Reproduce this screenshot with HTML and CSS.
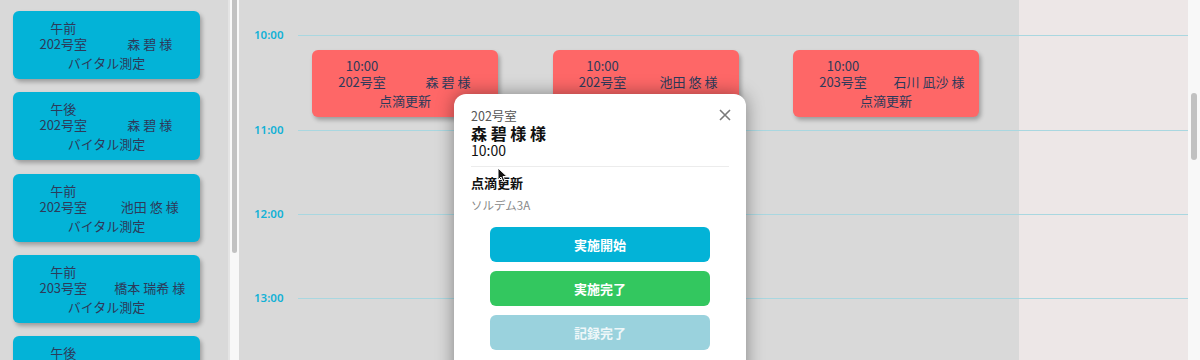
FILE: index.html
```html
<html lang="ja">
  <head>
    <meta charset="UTF-8" />
    <meta name="viewport" content="width=device-width, initial-scale=1.0" />
    <title>Schedule</title>
    <link rel="stylesheet" href="styles.css">
  </head>
  <body>
    <div class="page">
      <!-- task list -->
      <div class="sidebar">
        <div class="task-card">
          <span class="slot">午前</span><span></span>
          <span>202号室</span><span>森 碧 様</span>
          <span class="kind">バイタル測定</span>
        </div>
        <div class="task-card">
          <span class="slot">午後</span><span></span>
          <span>202号室</span><span>森 碧 様</span>
          <span class="kind">バイタル測定</span>
        </div>
        <div class="task-card">
          <span class="slot">午前</span><span></span>
          <span>202号室</span><span>池田 悠 様</span>
          <span class="kind">バイタル測定</span>
        </div>
        <div class="task-card">
          <span class="slot">午前</span><span></span>
          <span>203号室</span><span>橋本 瑞希 様</span>
          <span class="kind">バイタル測定</span>
        </div>
        <div class="task-card">
          <span class="slot">午後</span><span></span>
          <span>203号室</span><span>橋本 瑞希 様</span>
          <span class="kind">バイタル測定</span>
        </div>
        <div class="task-card">
          <span class="slot">午後</span><span></span>
          <span>203号室</span><span>石川 凪沙 様</span>
          <span class="kind">バイタル測定</span>
        </div>
      </div>
      <div class="scrollbar side-bar"><div class="thumb"></div></div>

      <!-- timeline -->
      <div class="timeline">
        <div class="hour-row">
          <div class="hour-label">10:00</div>
          <div class="hour-body events">
            <div class="task-card event">
              <span class="slot">10:00</span><span></span>
              <span>202号室</span><span>森 碧 様</span>
              <span class="kind">点滴更新</span>
            </div>
            <div class="task-card event">
              <span class="slot">10:00</span><span></span>
              <span>202号室</span><span>池田 悠 様</span>
              <span class="kind">点滴更新</span>
            </div>
            <div class="task-card event">
              <span class="slot">10:00</span><span></span>
              <span>203号室</span><span>石川 凪沙 様</span>
              <span class="kind">点滴更新</span>
            </div>
          </div>
        </div>
        <div class="hour-row">
          <div class="hour-label">11:00</div>
          <div class="hour-body"></div>
        </div>
        <div class="hour-row">
          <div class="hour-label">12:00</div>
          <div class="hour-body"></div>
        </div>
        <div class="hour-row">
          <div class="hour-label">13:00</div>
          <div class="hour-body"></div>
        </div>
      </div>
      <div class="scrollbar main-bar"><div class="thumb"></div></div>
    </div>

    <!-- detail dialog -->
    <div class="dialog">
      <svg class="close" width="12" height="12" viewBox="0 0 12 12">
        <path d="M1 1 L11 11 M11 1 L1 11" stroke="#7a7a7a" stroke-width="1.6" fill="none" />
      </svg>
      <div class="dialog-room">202号室</div>
      <div class="dialog-name">森 碧 様 様</div>
      <div class="dialog-time">10:00</div>
      <hr />
      <div class="dialog-title">点滴更新</div>
      <div class="dialog-note">ソルデム3A</div>
      <div class="actions">
        <button class="btn start">実施開始</button>
        <button class="btn done">実施完了</button>
        <button class="btn record">記録完了</button>
      </div>
    </div>

    <svg class="cursor" width="11" height="16" viewBox="0 0 11 16">
      <path d="M1 1 L1 13 L4 10 L6 15 L8 14 L6 9.5 L10 9.5 Z" fill="#111" stroke="#fff" stroke-width="1" />
    </svg>
  </body>
</html>
```

FILE: styles.css
```css
/* body styles */
body {
  margin: 0;
  padding: 0;
  font-family: "Noto Sans CJK JP", "Noto Sans", sans-serif;
  overflow: hidden;
}

.page {
  display: flex;
  height: 360px;
  overflow: hidden;
}

/* sidebar */
.sidebar {
  width: 215px;
  padding: 11px 0 0 13px;
  background-color: #d9d9d9;
  overflow: hidden;
}

.task-card {
  display: grid;
  grid-template-columns: 1fr 1fr;
  align-content: start;
  box-sizing: border-box;
  width: 187px;
  height: 68px;
  margin-bottom: 13.25px;
  padding: 9px 7px 0;
  border-radius: 6px;
  background-color: #03b3d7;
  box-shadow: 2px 3px 4px rgba(0, 0, 0, 0.28);
  color: #2d3a5a;
  font-size: 13px;
  line-height: 16px;
  text-align: center;
  white-space: nowrap;
}

.task-card .kind {
  grid-column: 1 / 3;
  margin-top: 3px;
}

/* fake scrollbars */
.scrollbar {
  box-sizing: border-box;
  background-color: #f8f8f8;
}

.side-bar {
  width: 11px;
  padding: 0 2px;
  border-left: 2px solid #e4e4e4;
}

.side-bar .thumb {
  height: 253px;
  border-radius: 0 0 4px 4px;
  background-color: #c1c1c1;
}

.main-bar {
  width: 12px;
  padding: 93px 3px 0;
}

.main-bar .thumb {
  height: 67px;
  border-radius: 3px;
  background-color: #c1c1c1;
}

/* timeline */
.timeline {
  flex: 1;
  padding-top: 35px;
  background: linear-gradient(to right, #d9d9d9 780px, #ede7e7 780px);
}

.hour-row {
  display: flex;
}

.hour-label {
  width: 44px;
  padding-left: 15px;
  margin-top: -7px;
  height: 14px;
  line-height: 14px;
  font-family: "Noto Sans", sans-serif;
  font-size: 11.5px;
  font-weight: 600;
  color: #12b1d6;
}

.hour-body {
  flex: 1;
  height: 83px;
  border-top: 1px solid #a9d7e0;
}

.events {
  display: flex;
  gap: 54.5px;
  height: auto;
  padding: 14px 0 13px 14px;
}

.task-card.event {
  width: 186px;
  height: 67px;
  margin: 0;
  padding-top: 8px;
  background-color: #fe6767;
}

/* dialog */
.dialog {
  position: absolute;
  left: 454px;
  top: 94px;
  width: 292px;
  height: 300px;
  box-sizing: border-box;
  padding: 13px 17px 0;
  border-radius: 12px;
  background-color: #fff;
  box-shadow: 0 0 18px rgba(0, 0, 0, 0.4);
  color: #111;
}

.close {
  position: absolute;
  right: 15px;
  top: 15px;
}

.dialog-room {
  font-size: 12.5px;
  line-height: 18px;
  color: #555;
}

.dialog-name {
  font-size: 16px;
  font-weight: bold;
  line-height: 17px;
}

.dialog-time {
  font-size: 14px;
  line-height: 17px;
}

.dialog hr {
  margin: 7px 0 0;
  border: none;
  border-top: 1px solid #ececec;
}

.dialog-title {
  margin-top: 8px;
  font-size: 13px;
  font-weight: bold;
  line-height: 16px;
}

.dialog-note {
  margin-top: 6px;
  font-size: 11.5px;
  line-height: 16px;
  color: #888;
}

.actions {
  display: flex;
  flex-direction: column;
  align-items: center;
  gap: 9px;
  margin-top: 14px;
}

.btn {
  width: 220px;
  height: 35px;
  border: none;
  border-radius: 6px;
  font-family: "Noto Sans CJK JP", sans-serif;
  font-size: 13px;
  font-weight: bold;
  color: #fff;
}

.btn.start {
  background-color: #03b3d7;
}

.btn.done {
  background-color: #33c75f;
}

.btn.record {
  background-color: #9ad2dd;
  color: #eef7f9;
}

.cursor {
  position: absolute;
  left: 497px;
  top: 167px;
}
```
